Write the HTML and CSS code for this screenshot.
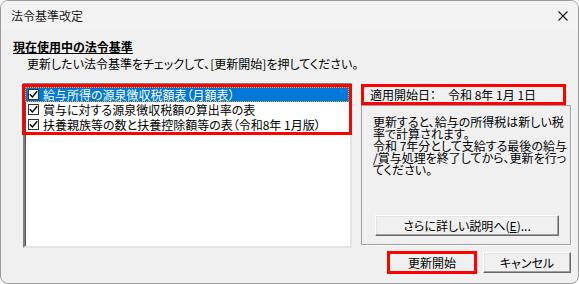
FILE: index.html
```html
<!DOCTYPE html>
<html lang="ja">
<head>
    <meta charset="UTF-8">
    <meta name="viewport" content="width=device-width, initial-scale=1.0">
    <title>法令基準改定</title>
    <link rel="stylesheet" href="styles.css">
</head>
<body>
    <div class="window">
        <div class="titlebar">
            <span class="title">法令基準改定</span>
            <svg class="close" width="10" height="10" viewBox="0 0 10 10">
                <path d="M0.5 0.5 L9.5 9.5 M9.5 0.5 L0.5 9.5" stroke="#1a1a1a" stroke-width="1.1" fill="none"/>
            </svg>
        </div>
        <div class="content">
            <div class="heading">現在使用中の法令基準</div>
            <div class="desc">更新したい法令基準をチェックして、[更新開始]を押してください。</div>
            <div class="main">
                <div class="listbox">
                    <div class="items">
                        <div class="item selected">
                            <span class="check"><svg width="9" height="9" viewBox="0 0 9 9"><path d="M0.8 4.3 L3.4 7 L8.2 1.2" stroke="#000" stroke-width="1.4" fill="none"/></svg></span>
                            <span>給与所得の源泉徴収税額表（月額表）</span>
                        </div>
                        <div class="item">
                            <span class="check"><svg width="9" height="9" viewBox="0 0 9 9"><path d="M0.8 4.3 L3.4 7 L8.2 1.2" stroke="#000" stroke-width="1.4" fill="none"/></svg></span>
                            <span>賞与に対する源泉徴収税額の算出率の表</span>
                        </div>
                        <div class="item">
                            <span class="check"><svg width="9" height="9" viewBox="0 0 9 9"><path d="M0.8 4.3 L3.4 7 L8.2 1.2" stroke="#000" stroke-width="1.4" fill="none"/></svg></span>
                            <span>扶養親族等の数と扶養控除額等の表（令和8年 1月版）</span>
                        </div>
                    </div>
                </div>
                <div class="side">
                    <div class="date">適用開始日：　令和 8年 1月 1日</div>
                    <div class="panel">
                        <div class="panel-text">
                            <div>更新すると、給与の所得税は新しい税</div>
                            <div>率で計算されます。</div>
                            <div>令和 7年分として支給する最後の給与</div>
                            <div>/賞与処理を終了してから、更新を行っ</div>
                            <div>てください。</div>
                        </div>
                        <button class="btn more">さらに詳しい説明へ(<u>E</u>)...</button>
                    </div>
                    <div class="actions">
                        <button class="btn action primary">更新開始</button>
                        <button class="btn action">キャンセル</button>
                    </div>
                </div>
            </div>
        </div>
    </div>
</body>
</html>
```
FILE: styles.css
```css
body {
    margin: 0;
    background: #fff;
    font-family: "Noto Sans CJK JP", sans-serif;
    font-size: 12px;
    font-feature-settings: "palt";
    color: #000;
}
.window {
    width: 579px;
    height: 284px;
    box-sizing: border-box;
    border: 1px solid #9a9a9a;
    border-radius: 8px;
    overflow: hidden;
    background: #f0f0f0;
}
.titlebar {
    height: 29px;
    background: #f3f3f3;
    display: flex;
    align-items: center;
    justify-content: space-between;
    padding: 0 10px 0 10px;
}
.title {
    line-height: 14px;
    color: #1a1a1a;
}
.close {
    display: block;
    margin-top: 1px;
}
.content {
    padding: 10px 0 0 12px;
}
.heading {
    font-weight: bold;
    text-decoration: underline;
    line-height: 14px;
}
.desc {
    margin: 3px 0 0 14px;
    line-height: 14px;
}
.main {
    display: flex;
    align-items: flex-start;
    margin: 12px 0 0 10px;
}
.listbox {
    width: 329px;
    height: 165px;
    box-sizing: border-box;
    background: #fff;
    border: 2px solid;
    border-color: #808080 #e3e3e3 #e3e3e3 #808080;
    box-shadow: inset 1px 1px 0 #505050;
    padding: 2px 0 0 0;
}
.items {
    outline: 3px solid #ff0000;
    margin: 0 1px 0 0;
}
.item {
    height: 15px;
    display: flex;
    align-items: center;
    padding-left: 3px;
    gap: 4px;
    white-space: nowrap;
    line-height: 15px;
}
.item.selected {
    background: #0078d7;
    color: #fff;
    outline: 1px dotted #f5a623;
    outline-offset: -1px;
}
.check {
    width: 11px;
    height: 11px;
    box-sizing: border-box;
    border: 1px solid #333;
    background: #fff;
    display: flex;
    align-items: center;
    justify-content: center;
    flex: none;
}
.check svg {
    display: block;
}
.side {
    width: 210px;
    margin-left: 9px;
    padding-top: 4px;
}
.date {
    width: 199px;
    height: 15px;
    margin-left: 3px;
    line-height: 15px;
    padding-left: 6px;
    box-sizing: border-box;
    outline: 3px solid #ff0000;
    white-space: nowrap;
}
.panel {
    margin-top: 3px;
    height: 140px;
    box-sizing: border-box;
    border: 1px solid #a0a0a0;
    box-shadow: 1px 1px 0 #fff;
    display: flex;
    flex-direction: column;
}
.panel-text {
    padding: 10px 0 0 11px;
    line-height: 12px;
    white-space: nowrap;
}
.btn {
    font-family: inherit;
    font-size: 12px;
    font-feature-settings: "palt";
    color: #000;
    background: #f0f0f0;
    border: 1px solid;
    border-color: #fff #696969 #696969 #fff;
    box-shadow: inset -1px -1px 0 #a0a0a0, inset 1px 1px 0 #e3e3e3;
    padding: 0;
    height: 21px;
    line-height: 19px;
}
.more {
    width: 184px;
    margin: auto 0 8px 13px;
}
.actions {
    display: flex;
    gap: 7px;
    margin-top: 7px;
    margin-left: 27px;
}
.action {
    width: 88px;
}
.primary {
    outline: 3px solid #ff0000;
    outline-offset: -2px;
}
```
